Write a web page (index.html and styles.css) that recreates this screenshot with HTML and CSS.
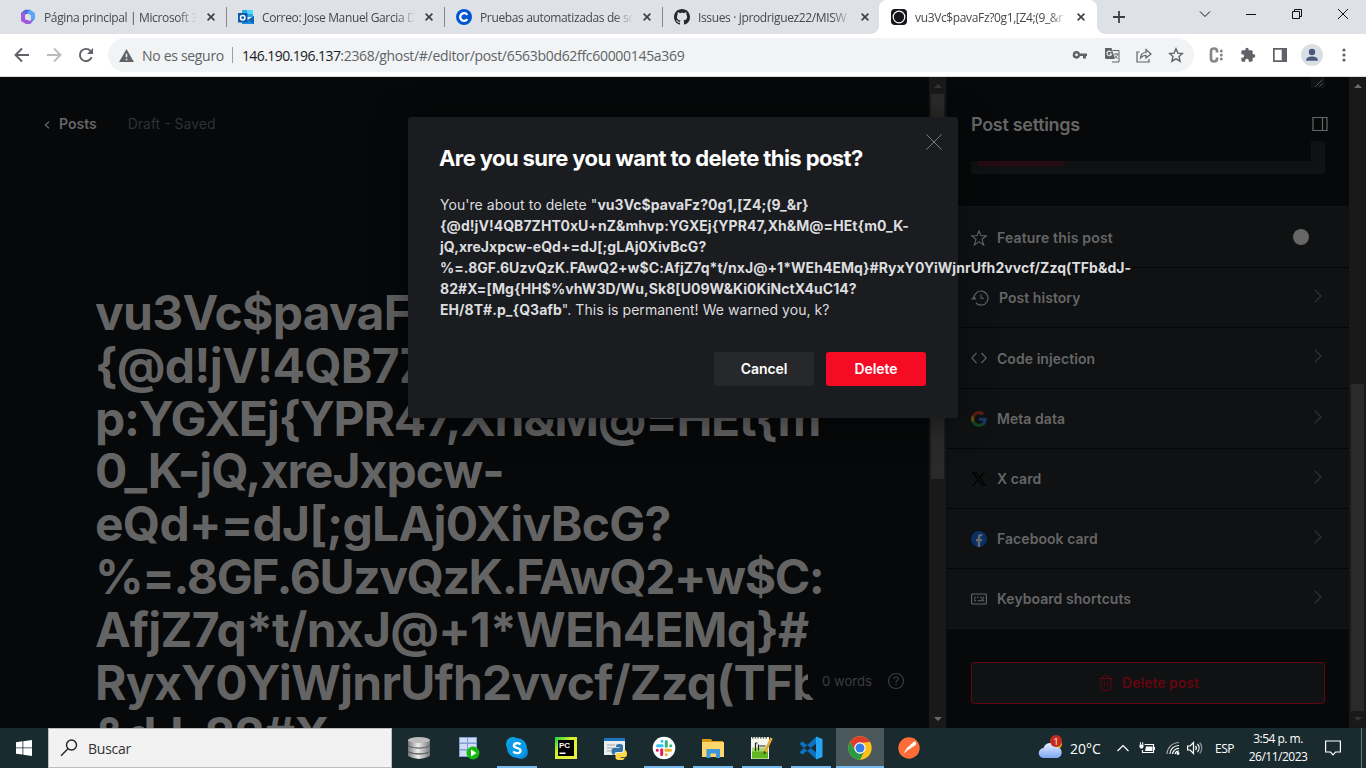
FILE: index.html
```html
<!DOCTYPE html>
<html lang="es">
<head>
<meta charset="utf-8">
<title>vu3Vc$pavaFz?0g1,[Z4;(9_&amp;r}</title>
<link rel="stylesheet" href="styles.css">
</head>
<body>
<header class="tabstrip">
  <div class="tab">
    <svg class="fav" viewBox="0 0 16 16"><path d="M5 .8h5L15 5v4L10.500 6.500 8 4.500 4.500 6v6L1 10V4z" fill="#4a6be0"/><path d="M10 .8L15 4v6l-5 5-4-1 5-3V6L7 4z" fill="#5ba8f4"/><path d="M1 5l4-3v8l5 2 4-2-4 5H6l-5-3z" fill="#a259d9"/><circle cx="8" cy="8" r="3" fill="#dee1e6"/></svg>
    <span class="tab-title">Página principal | Microsoft 3</span>
    <svg class="tab-x" viewBox="0 0 8 8"><path d="M.6.6l6.800 6.800M7.400.6L.6 7.400"/></svg>
  </div>
  <div class="tab">
    <svg class="fav" viewBox="0 0 16 16"><path d="M4 1h11v7H4z" fill="#28a8ea"/><path d="M9 1h6v4H9z" fill="#50d9ff"/><path d="M4 7l6 4 6-4v8H4z" fill="#1490df"/><path d="M16 7v8l-6-4z" fill="#0f64b5"/><path d="M0 4h9.500v9.500H0z" fill="#0f5aad"/><circle cx="4.700" cy="8.700" r="2.200" fill="none" stroke="#fff" stroke-width="1.500"/></svg>
    <span class="tab-title">Correo: Jose Manuel Garcia D</span>
    <svg class="tab-x" viewBox="0 0 8 8"><path d="M.6.6l6.800 6.800M7.400.6L.6 7.400"/></svg>
  </div>
  <div class="tab">
    <svg class="fav" viewBox="0 0 16 16"><circle cx="8" cy="8" r="8" fill="#0056d2"/><path d="M11.300 5.800A3.900 3.900 0 1 0 11.300 10.200" fill="none" stroke="#fff" stroke-width="2.300"/></svg>
    <span class="tab-title">Pruebas automatizadas de so</span>
    <svg class="tab-x" viewBox="0 0 8 8"><path d="M.6.6l6.800 6.800M7.400.6L.6 7.400"/></svg>
  </div>
  <div class="tab">
    <svg class="fav" viewBox="0 0 16 16"><path fill="#24292f" d="M8 0C3.580 0 0 3.580 0 8c0 3.540 2.290 6.530 5.470 7.590.4.070.55-.17.55-.38 0-.19-.01-.82-.01-1.490-2.010.37-2.530-.49-2.690-.94-.09-.23-.48-.94-.82-1.130-.28-.15-.68-.52-.01-.53.63-.01 1.080.58 1.230.82.72 1.210 1.870.87 2.330.66.070-.52.28-.87.51-1.070-1.780-.2-3.640-.89-3.640-3.950 0-.87.31-1.590.82-2.150-.08-.2-.36-1.020.08-2.120 0 0 .67-.21 2.200.82.64-.18 1.320-.27 2-.27s1.360.09 2 .27c1.530-1.040 2.200-.82 2.200-.82.44 1.100.16 1.920.08 2.120.51.56.82 1.270.82 2.150 0 3.070-1.870 3.750-3.650 3.950.29.25.54.73.54 1.480 0 1.070-.01 1.930-.01 2.200 0 .21.15.46.55.38A8.010 8.010 0 0 0 16 8c0-4.420-3.580-8-8-8z"/></svg>
    <span class="tab-title">Issues · jprodriguez22/MISW</span>
    <svg class="tab-x" viewBox="0 0 8 8"><path d="M.6.6l6.800 6.800M7.400.6L.6 7.400"/></svg>
  </div>
  <div class="tab tab-active">
    <svg class="fav" viewBox="0 0 16 16"><rect width="16" height="16" rx="4" fill="#15171a"/><circle cx="8" cy="8" r="5.800" fill="none" stroke="#fff" stroke-width="1.200"/></svg>
    <span class="tab-title">vu3Vc$pavaFz?0g1,[Z4;(9_&amp;r</span>
    <svg class="tab-x" viewBox="0 0 8 8"><path d="M.6.6l6.800 6.800M7.400.6L.6 7.400"/></svg>
  </div>
  <svg class="new-tab" viewBox="0 0 12 12"><path d="M6 0v12M0 6h12"/></svg>
  <div class="window-controls">
    <svg viewBox="0 0 12 12"><path d="M1 3.500l5 5 5-5"/></svg>
    <svg viewBox="0 0 12 12"><path d="M1 6.500h10"/></svg>
    <svg viewBox="0 0 12 12"><path d="M1.500 3.500h7v7h-7zM3.500 3.500v-2h7v7h-2"/></svg>
    <svg viewBox="0 0 12 12"><path d="M1 1l10 10M11 1L1 11"/></svg>
  </div>
</header>

<nav class="toolbar">
  <div class="nav-buttons">
    <svg viewBox="0 0 16 16" class="nav-ic"><path d="M15 8H2M8 1.500L1.500 8 8 14.500"/></svg>
    <svg viewBox="0 0 16 16" class="nav-ic nav-off"><path d="M1 8h13M8 1.500L14.500 8 8 14.500"/></svg>
    <svg viewBox="0 0 16 16" class="nav-ic"><path d="M13.700 10.200A6.100 6.100 0 1 1 12.600 4"/><path d="M15 1v6H9z" class="solid"/></svg>
  </div>
  <div class="omnibox">
    <svg class="warn" viewBox="0 0 16 14"><path d="M8 0l8 14H0z" fill="#5f6368"/><path d="M7.200 5h1.600v4H7.200zM7.200 10.500h1.600V12H7.200z" fill="#f1f3f4"/></svg>
    <span class="insecure">No es seguro</span>
    <span class="omni-sep"></span>
    <span class="url"><span class="host">146.190.196.137</span>:2368/ghost/#/editor/post/6563b0d62ffc60000145a369</span>
    <div class="omni-icons">
      <svg viewBox="0 0 16 16"><path fill-rule="evenodd" d="M4.500 4a3.800 3.800 0 1 0 3.600 5H11v2.500h3V9h1V6.400H8.100A3.800 3.800 0 0 0 4.500 4zm0 2.400a1.400 1.400 0 1 1 0 2.800 1.400 1.400 0 0 1 0-2.800z"/></svg>
      <svg viewBox="0 0 16 16"><path d="M1 1h6.500l3.500 11H2L1 11z"/><path d="M8.500 3.500H15v11.500H8" fill="none" stroke="#5f6368"/><path d="M7.300 5.300A2.300 2.300 0 1 0 7.500 7H5.500" fill="none" stroke="#f1f3f4" stroke-width="1.100"/><path d="M10 7h4.500M12.200 6v1M13.700 7c-.4 2-1.700 3.300-3 4M10.800 8.500c.8 1.500 1.800 2.500 3 3" fill="none" stroke="#5f6368" stroke-width=".9"/></svg>
      <svg viewBox="0 0 16 16"><path fill="none" stroke="#5f6368" stroke-width="1.200" d="M3.500 5H1v10h12v-3M4.500 11c.3-4 2.500-5.500 5.500-5.500V2.600L15 7l-5 4V8.300c-2.400 0-4 .7-5.500 2.700z"/></svg>
      <svg viewBox="0 0 16 16"><path fill="none" stroke="#5f6368" stroke-width="1.400" d="M8 1.800l1.900 4.300 4.600.4-3.500 3.100 1.100 4.600L8 11.800l-4.100 2.400L5 9.600 1.500 6.500l4.600-.4z"/></svg>
    </div>
  </div>
  <div class="tool-icons">
    <svg viewBox="0 0 16 16"><path fill="none" stroke="#868686" stroke-width="2.700" d="M9 5.500V4.200C9 2.500 8 1.500 6.200 1.500S3 2.500 3 4.200v7.600c0 1.700 1.300 2.700 3.200 2.700S9 13.500 9 11.800v-1.300"/><circle cx="13.300" cy="4" r="1.500" fill="#868686"/><circle cx="13.300" cy="8" r="1.500" fill="#868686"/><circle cx="13.300" cy="12" r="1.500" fill="#868686"/></svg>
    <svg viewBox="0 0 24 24"><path fill="#5f6368" d="M20.500 11H19V7a2 2 0 0 0-2-2h-4V3.500a2.500 2.500 0 0 0-5 0V5H4a2 2 0 0 0-2 2v3.800h1.500a2.700 2.700 0 0 1 0 5.400H2V20a2 2 0 0 0 2 2h3.800v-1.500a2.700 2.700 0 0 1 5.400 0V22H17a2 2 0 0 0 2-2v-4h1.500a2.500 2.500 0 0 0 0-5z"/></svg>
    <svg viewBox="0 0 16 16"><path fill="#5f6368" fill-rule="evenodd" d="M1 1h14v14H1zM2.700 2.700v10.600h7V2.700z"/></svg>
    <svg class="avatar" viewBox="0 0 22 22"><circle cx="11" cy="11" r="11" fill="#dadfe6"/><circle cx="11" cy="8" r="3.200" fill="#4b5a7a"/><path d="M5 16.800c0-3 3-4.300 6-4.300s6 1.300 6 4.300z" fill="#4b5a7a"/></svg>
    <svg viewBox="0 0 16 16"><g fill="#5f6368"><circle cx="8" cy="3" r="1.600"/><circle cx="8" cy="8" r="1.600"/><circle cx="8" cy="13" r="1.600"/></g></svg>
  </div>
</nav>

<main class="page">
  <section class="editor">
    <div class="editor-head">
      <svg class="back" viewBox="0 0 6 8"><path d="M5 .8L1.300 4 5 7.200"/></svg>
      <span class="posts">Posts</span>
      <span class="status">Draft - Saved</span>
    </div>
    <h1 class="post-title"><span>vu3Vc$pavaFz?0g1,[Z4;(9_&amp;r}</span><span>{@d!jV!4QB7ZHT0xU+nZ&amp;mhv</span><span class="tight">p:YGXEj{YPR47,Xh&amp;M@=HEt{m</span><span class="snug">0_K-jQ,xreJxpcw-</span><span>eQd+=dJ[;gLAj0XivBcG?</span><span class="tighter">%=.8GF.6UzvQzK.FAwQ2+w$C:</span><span>AfjZ7q*t/nxJ@+1*WEh4EMq}#</span><span>RyxY0YiWjnrUfh2vvcf/Zzq(TFb</span><span class="snug">&amp;dJ-82#X</span></h1>
    <div class="words"><span>0 words</span>
      <svg viewBox="0 0 18 18"><circle cx="9" cy="9" r="7.500"/><path d="M6.800 7.200C6.800 5.800 7.700 5 9 5s2.200.8 2.200 2c0 1.600-2.200 1.600-2.200 3.400M9 12v1.200"/></svg>
    </div>
  </section>
  <div class="scrollbar sb-editor"><i class="up dim"></i><b></b><i class="down"></i></div>
  <aside class="settings">
    <div class="settings-top">
      <div class="excerpt"><svg viewBox="0 0 8 8"><path d="M.5 7.500l7-7M4.500 7.500l3-3"/></svg></div>
      <div class="authors"><span></span></div>
      <div class="settings-head"><h2>Post settings</h2></div>
      <svg class="panel-ic" viewBox="0 0 16 14"><path d="M1 .5h14v13H1zM10.500.5v13"/></svg>
    </div>
    <ul class="rows">
      <li class="tall first"><svg class="ic" viewBox="0 0 16 16"><path d="M8 .8l2 5h5.300L11 9.300l1.700 5.700L8 11.600 3.300 15 5 9.300.7 5.800H6z"/></svg><span class="feature">Feature this post</span><em class="knob"></em></li>
      <li><svg class="ic wide" viewBox="0 0 18 18"><path d="M3 9a7 7 0 1 1 2 5M10 5.500V9.200h3"/><path d="M0 10.500L3 7l2.500 3.500z" class="fillic"/></svg><span>Post history</span><svg class="chev" viewBox="0 0 8 14"><path d="M.7.7L7 7 .7 13.300"/></svg></li>
      <li class="tall"><svg class="ic" viewBox="0 0 16 16"><path d="M5.500 3L.8 8l4.700 5M10.500 3l4.700 5-4.700 5"/></svg><span>Code injection</span><svg class="chev" viewBox="0 0 8 14"><path d="M.7.7L7 7 .7 13.300"/></svg></li>
      <li><svg class="ic brand" viewBox="0 0 24 24"><path fill="#1a3664" d="M23.500 12.300c0-.8-.1-1.600-.2-2.300H12v4.500h6.500a5.600 5.600 0 0 1-2.400 3.600v3h3.900c2.200-2.100 3.500-5.100 3.500-8.800z"/><path fill="#14441f" d="M12 24c3.200 0 6-1.100 8-2.900l-3.900-3a7.300 7.300 0 0 1-10.800-3.800h-4v3.100A12 12 0 0 0 12 24z"/><path fill="#645000" d="M5.300 14.300a7 7 0 0 1 0-4.600V6.600h-4a12 12 0 0 0 0 10.800z"/><path fill="#5f1c16" d="M12 4.800c1.800 0 3.300.6 4.600 1.800L20 3.200A12 12 0 0 0 1.300 6.600l4 3.100A7.100 7.100 0 0 1 12 4.800z"/></svg><span>Meta data</span><svg class="chev" viewBox="0 0 8 14"><path d="M.7.7L7 7 .7 13.300"/></svg></li>
      <li><svg class="ic brand" viewBox="0 0 16 16"><path fill="#020202" fill-rule="evenodd" d="M1 1h4.500l3.300 4.500L12.700 1h1.800L9.600 6.600 15 15h-4.500L6.900 9.800 2.600 15H.9l5.200-6.200zM3.400 2.300l7.800 11.400h1.500L4.900 2.300z"/></svg><span>X card</span><svg class="chev" viewBox="0 0 8 14"><path d="M.7.7L7 7 .7 13.300"/></svg></li>
      <li><svg class="ic brand" viewBox="0 0 16 16"><circle cx="8" cy="8" r="8" fill="#0a2f62"/><path fill="#656a70" d="M6.800 16v-5.700H4.900V8h1.900V6.200c0-2 1.200-3.100 3-3.100l1.500.1v2h-1c-.9 0-1.200.5-1.200 1.100V8h2.200l-.4 2.300H9.100V16z"/></svg><span>Facebook card</span><svg class="chev" viewBox="0 0 8 14"><path d="M.7.7L7 7 .7 13.300"/></svg></li>
      <li class="last"><svg class="ic" viewBox="0 0 16 16"><rect x=".6" y="3" width="14.800" height="10" rx="1"/><path d="M3 6.200h1.700M6 6.200h1.700M9 6.200h1.700M11.700 6.200h1.500M3 9.800h2M6.500 9.800h6.700M3 8h1.500M10 8h3"/></svg><span>Keyboard shortcuts</span><svg class="chev" viewBox="0 0 8 14"><path d="M.7.7L7 7 .7 13.300"/></svg></li>
    </ul>
    <button class="delete-post"><svg viewBox="0 0 14 16"><path d="M.5 3.500h13M4.500 3.500V1.800c0-.7.400-1.100 1-1.100h3c.6 0 1 .4 1 1.100v1.700M2 3.500v10.700c0 .7.500 1.200 1.200 1.200h7.600c.7 0 1.200-.5 1.200-1.200V3.500M5.300 7v5M8.700 7v5"/></svg><span>Delete post</span></button>
  </aside>
  <div class="scrollbar sb-page"><i class="up"></i><b></b><i class="down dim"></i></div>

  <div class="modal" role="dialog">
    <svg class="close" viewBox="0 0 16 16"><path d="M.5.5l15 15M15.500.5l-15 15"/></svg>
    <h1>Are you sure you want to delete this post?</h1>
    <p>You're about to delete "<strong>vu3Vc$pavaFz?0g1,[Z4;(9_&amp;r}<br>{@d!jV!4QB7ZHT0xU+nZ&amp;mhvp:YGXEj{YPR47,Xh&amp;M@=HEt{m0_K-<br>jQ,xreJxpcw-eQd+=dJ[;gLAj0XivBcG?<br>%=.8GF.6UzvQzK.FAwQ2+w$C:AfjZ7q*t/nxJ@+1*WEh4EMq}#RyxY0YiWjnrUfh2vvcf/Zzq(TFb&amp;dJ-<br>82#X=[Mg{HH$%vhW3D/Wu,Sk8[U09W&amp;Ki0KiNctX4uC14?<br>EH/8T#.p_{Q3afb</strong>". This is permanent! We warned you, k?</p>
    <div class="actions"><button>Cancel</button><button class="danger">Delete</button></div>
  </div>
</main>

<footer class="taskbar">
  <div class="start"><svg viewBox="0 0 16 16"><path fill="#fff" d="M0 2.200l6.500-.9v6.200H0zM7.300 1.200L16 0v7.500H7.300zM0 8.300h6.500v6.300L0 13.700zM7.300 8.300H16V16l-8.700-1.200z"/></svg></div>
  <div class="search"><svg viewBox="0 0 18 18"><circle cx="11.500" cy="6" r="5"/><path d="M8 9.700L1 16.800"/></svg><span>Buscar</span></div>
  <div class="apps">
    <div class="app"><svg viewBox="0 0 24 24"><defs><linearGradient id="steel"><stop offset="0" stop-color="#777"/><stop offset=".45" stop-color="#eee"/><stop offset="1" stop-color="#777"/></linearGradient></defs><path fill="url(#steel)" d="M1 4h22v5.500q-11 4.500-22 0zM1 10.500q11 4 22 0v5q-11 4-22 0zM1 16.500q11 4 22 0V20q-11 6-22 0z"/><path fill="none" stroke="#858585" stroke-width=".8" d="M1 10q11 4.200 22 0M1 16q11 4.200 22 0"/><ellipse cx="12" cy="4" rx="11" ry="3" fill="#bdbdbd"/></svg></div>
    <div class="app"><svg viewBox="0 0 24 24"><path fill="#7f9fd4" d="M3 1h18v20H3z"/><path fill="#cfdcf3" d="M4 2h7v4.500H4zM12 2h8v4.500h-8zM4 8h7v5H4zM12 8h8v5h-8zM4 14.500h7V20H4z"/><circle cx="17" cy="17" r="6.500" fill="#17b80f"/><path fill="#fff" d="M15 13.500l5.500 3.500-5.500 3.500z"/></svg></div>
    <div class="app run"><svg viewBox="0 0 24 24"><circle cx="8" cy="8" r="7" fill="#0aa5ea"/><circle cx="16" cy="16" r="7" fill="#0a86d8"/><circle cx="12" cy="12" r="10" fill="#0a9be6"/><path fill="none" stroke="#fff" stroke-width="2.300" d="M15.500 8.500C14 6.500 9 6.800 8.900 9.500c0 3.300 6.800 1.700 6.600 5.200-.2 3-5.500 3-7.200.6"/></svg></div>
    <div class="app"><svg viewBox="0 0 24 24"><defs><linearGradient id="pc" x2="1" y2="1"><stop offset="0" stop-color="#0fd64a"/><stop offset=".4" stop-color="#d5f02a"/><stop offset="1" stop-color="#f3ee4a"/></linearGradient></defs><path fill="url(#pc)" d="M1 1h22v22H1z"/><path d="M4 4h16v16H4z"/><text x="5" y="12" class="pc-text">PC</text><path fill="#fff" d="M5.500 16.500h6V18h-6z"/></svg></div>
    <div class="app"><svg viewBox="0 0 24 24"><path fill="#e9edf0" d="M1 2h21v17H1z"/><path fill="#1d75bd" d="M1 2h21v3H1z"/><path stroke="#9aa" d="M4 9h8M4 12h5M4 15h4"/><path fill="#3673a5" d="M16 8c4 0 4 1 4 3v3c0 1.500-1 2-2 2h-4c-2 0-2.500 1-2.500 3C9 19 8.500 17 8.500 15c0-3 2-3.300 3-3.300h5v-.8H13c0-2 .5-2.900 3-2.900z"/><path fill="#ffd94b" d="M17 24c-4 0-4.500-1-4.500-3v-2c0-1.500 1-2 2-2H19c1.500 0 2-1 2-3 2.500 0 3 2 3 4 0 3-1.500 3.300-3 3.300h-3.500v.7h4c0 1.500-1 2-4.500 2z"/></svg></div>
    <div class="app run"><svg viewBox="0 0 24 24"><circle cx="12" cy="12" r="11.300" fill="#fff"/><g fill="none" stroke-width="3" stroke-linecap="round"><path stroke="#36c5f0" d="M5.500 9.700h4.700M10 5.200v.1"/><path stroke="#2eb67d" d="M14.300 5.500v4.700M18.700 9.700h.1"/><path stroke="#ecb22e" d="M13.800 14.300h4.700M14.200 18.600v.1"/><path stroke="#e01e5a" d="M9.700 13.800v4.700M5.300 14.300h-.1"/></g></svg></div>
    <div class="app run"><svg viewBox="0 0 24 24"><path fill="#d99a13" d="M1 3h9l1.500 2H22v4H1z"/><path fill="#ffd66b" d="M1 6h22v15H1z"/><path fill="#3e97dc" d="M5.500 13h13.500v9h-4v-4.500H9.500V22h-4z"/></svg></div>
    <div class="app run"><svg viewBox="0 0 24 24"><path fill="#f4f6ee" d="M1 1h18v22H1z"/><path fill="#5fb81f" d="M2 14h16v8.500H2z"/><path fill="#a5da68" d="M2 11.500h16v4H2z"/><path stroke="#555" stroke-width="1.500" stroke-dasharray="1.500 1.200" d="M2 1.700h16"/><path fill="none" stroke="#222" stroke-width="1.200" d="M5.500 7v8M5.500 7h2M8.500 8.500v6M9.500 10h6"/><path stroke="#e8a63a" stroke-width="2.800" d="M21.500 2L15 16"/><path fill="#633" d="M13.700 15l2.600 1.300-2.600 3z"/></svg></div>
    <div class="app run"><svg viewBox="0 0 24 24"><path fill="#0a74c4" d="M18 1v6L3.500 18.500.5 16.200 17 1zM18 23v-6L3.500 5.500.5 7.800 17 23z"/><path fill="#25a6f2" d="M17 .5L23.500 3v18L17 23.500z"/></svg></div>
    <div class="app run active"><svg viewBox="0 0 24 24"><circle cx="12" cy="12" r="11.700" fill="#fbc116"/><path fill="#df3c30" d="M1.900 6.100a11.700 11.700 0 0 1 20.200 0L12 6.700a5.300 5.300 0 0 0-4.600 8z"/><path fill="#279a46" d="M1.900 6.100A11.700 11.700 0 0 0 12 23.700l4.600-8.900a5.300 5.300 0 0 1-9.200 0z"/><circle cx="12" cy="12" r="5.700" fill="#fff"/><circle cx="12" cy="12" r="4.500" fill="#377ce8"/></svg></div>
    <div class="app"><svg viewBox="0 0 24 24"><circle cx="12" cy="12" r="10.700" fill="#ff6c37"/><path fill="#fff" d="M18 5.500a2.300 2.300 0 0 1 .5 3.600L11 14l-4.800 4 3.700-6L15.500 7A2.300 2.300 0 0 1 18 5.500z"/></svg></div>
  </div>
  <div class="tray">
    <svg class="weather" viewBox="0 0 26 24"><defs><linearGradient id="cl" x2="0" y2="1"><stop offset="0" stop-color="#e8efff"/><stop offset="1" stop-color="#7ba7f2"/></linearGradient></defs><circle cx="19.500" cy="9" r="4.500" fill="#f7a21b"/><path fill="url(#cl)" d="M6 23a5 5 0 0 1-.5-10A7 7 0 0 1 18.500 12a5.600 5.600 0 0 1 1 11z"/><circle cx="18" cy="6" r="6" fill="#c52b1e"/><text x="15.500" y="9.500" class="badge">1</text></svg>
    <span class="temp">20°C</span>
    <svg class="t-up" viewBox="0 0 12 12"><path d="M.5 9L6 3.500 11.500 9"/></svg>
    <svg class="t-bat" viewBox="0 0 16 12"><path d="M5.500 2.500h9v8H3.500V8"/><path d="M7 4.500h6.500v4.500H6z" class="w"/><path d="M14.500 5h1.500v3h-1.500zM.5 2.500h4v2.500L3.500 6.500h-2L.5 5zM1 .3h1v2H1zM3.200.3h1v2h-1z" class="w"/></svg>
    <svg class="t-wifi" viewBox="0 0 14 14"><path d="M1 13A12 12 0 0 1 13 1.500" opacity=".6"/><path d="M3.800 13A9 9 0 0 1 13 4.500M6.500 13A6.500 6.500 0 0 1 13 7.300M9 13a4 4 0 0 1 4-3"/><circle cx="12" cy="12.500" r="1.400" class="w"/></svg>
    <svg class="t-vol" viewBox="0 0 17 14"><path d="M.6 5h2.500L6.500 1.500v11L3.100 9H.6zM8.500 5a3 3 0 0 1 0 4M10.500 3a6 6 0 0 1 0 8"/><path d="M12.700 1.500a8.500 8.500 0 0 1 0 11" opacity=".5"/></svg>
    <span class="lang">ESP</span>
    <div class="clock"><span>3:54 p. m.</span><span>26/11/2023</span></div>
    <svg class="t-note" viewBox="0 0 16 16"><path d="M.6 1h14.800v11H10.500L8 14.800 5.500 12H.6z"/></svg>
    <span class="peek"></span>
  </div>
</footer>
</body>
</html>
```
FILE: styles.css
```css
* { box-sizing: border-box; }
body { margin: 0; width: 1366px; height: 768px; overflow: hidden; display: flex; flex-direction: column; font-family: Inter, sans-serif; background: #060809; }
svg { display: block; flex: none; }
button { font: inherit; border: 0; padding: 0; }

/* tab strip */
.tabstrip { height: 34px; background: #dee1e6; display: flex; align-items: center; padding-left: 9px; font: 12px "Open Sans", sans-serif; letter-spacing: -.36px; color: #45494d; }
.tab { width: 218px; height: 34px; display: flex; align-items: center; padding-left: 11px; position: relative; }
.tab:not(.tab-active)::after { content: ""; width: 1px; height: 20px; background: #84888c; margin-left: 11px; }
.tab:nth-child(4)::after { visibility: hidden; }
.fav { width: 16px; height: 16px; margin-right: 8px; }
.tab-title { width: 152px; overflow: hidden; white-space: nowrap; mask-image: linear-gradient(90deg, #000 134px, transparent 153px); }
.tab-x { width: 8px; height: 8px; margin-left: 11px; stroke: #3c4043; stroke-width: 1.600; fill: none; }
.tab-active { background: #fff; border-radius: 8px 8px 0 0; margin-left: -2px; padding-left: 12px; }
.tab-active::before, .tab-active::after { content: ""; position: absolute; bottom: 0; width: 8px; height: 8px; }
.tab-active::before { left: -8px; background: radial-gradient(circle at 0 0, #dee1e6 7.500px, #fff 8px); }
.tab-active::after { right: -8px; background: radial-gradient(circle at 100% 0, #dee1e6 7.500px, #fff 8px); }
.tab-active .tab-x { margin-left: 10px; }
.new-tab { width: 12px; height: 12px; margin-left: 16px; stroke: #3c4043; stroke-width: 1.800; }
.window-controls { display: flex; gap: 34px; margin-left: auto; padding: 0 17px 6px 0; }
.window-controls svg { width: 12px; height: 12px; fill: none; stroke: #111; }

/* toolbar */
.toolbar { height: 43px; background: #fff; border-bottom: 1px solid #dcdfe2; display: flex; align-items: center; padding-left: 14px; }
.nav-buttons { display: flex; gap: 16px; }
.nav-ic { width: 16px; height: 16px; fill: none; stroke: #5f6368; stroke-width: 1.900; }
.nav-ic .solid { fill: #5f6368; stroke: none; }
.nav-off { stroke: #babcbe; }
.omnibox { width: 1086px; height: 34px; margin-left: 14px; border-radius: 17px; background: #f1f3f4; display: flex; align-items: center; padding: 0 10px 0 11px; font: 14px "Open Sans", sans-serif; letter-spacing: -.31px; color: #5f6368; }
.warn { width: 15px; height: 13px; margin-right: 8px; }
.omni-sep { width: 1px; height: 16px; background: #9aa0a6; margin: 0 9px 0 8px; }
.url { white-space: nowrap; }
.host { color: #202124; letter-spacing: -.58px; }
.omni-icons { display: flex; gap: 16px; margin-left: auto; }
.omni-icons svg { width: 16px; height: 16px; fill: #5f6368; }
.tool-icons { display: flex; align-items: center; gap: 16px; margin-left: 14px; }
.tool-icons svg { width: 16px; height: 16px; }
.tool-icons .avatar { width: 22px; height: 22px; margin: 0 -3px; }

/* editor */
.page { height: 651px; display: flex; position: relative; overflow: hidden; }
.editor { width: 929px; position: relative; overflow: hidden; background: #060809; }
.editor-head { display: flex; align-items: center; height: 20px; margin: 37px 0 0 44px; font-size: 14px; }
.back { width: 6px; height: 8px; margin-top: 2px; fill: none; stroke: #666; stroke-width: 1.200; }
.posts { margin: -1px 0 0 9px; font-weight: 600; color: #666; }
.status { margin: -1px 0 0 31px; color: #2f3235; }
.post-title { margin: 153px 0 0 95px; font-size: 48px; line-height: 52.800px; font-weight: 700; letter-spacing: -.75px; color: #646464; white-space: nowrap; }
.post-title span { display: block; }
.post-title .snug { letter-spacing: -.95px; }
.post-title .tight { letter-spacing: -1.250px; }
.post-title .tighter { letter-spacing: -1.400px; }
.words { position: absolute; left: 808px; top: 583px; width: 121px; height: 41px; border-radius: 12px; padding-left: 14px; background: #060809; display: flex; align-items: center; font-size: 13.100px; color: #3b3d40; white-space: nowrap; }
.words svg { width: 18px; height: 18px; margin-left: 15px; margin-top: 1px; fill: none; stroke: #3b3d40; stroke-width: 1.200; }

/* scrollbars */
.scrollbar { width: 17px; background: #191919; display: flex; flex-direction: column; align-items: center; }
.sb-editor { width: 18px; border-right: 1px solid #0b0c0d; }
.scrollbar b { width: 13px; background: #2a2a2a; }
.scrollbar i { width: 0; height: 0; border: 4px solid transparent; }
.scrollbar .up { border-bottom-color: #6a6a6a; border-top: 0; margin-top: 7px; }
.scrollbar .down { border-top-color: #6a6a6a; border-bottom: 0; margin: auto 0 7px; }
.scrollbar .up.dim { border-bottom-color: #343434; }
.scrollbar .down.dim { border-top-color: #343434; }
.sb-editor b { height: 385px; margin-top: 6px; }
.sb-page b { height: 327px; margin-top: 296px; }

/* settings panel */
.settings { width: 402px; background: #060809; color: #666; font-size: 14px; font-weight: 600; letter-spacing: .05px; }
.settings-top { height: 130px; position: relative; }
.excerpt { position: absolute; left: 364px; top: 0; width: 14px; height: 11px; background: #0f1113; }
.excerpt svg { width: 8px; height: 8px; margin: 2px 0 0 4px; stroke: #555; }
.authors { position: absolute; left: 24px; top: 64px; width: 354px; height: 33px; background: #0f1113; border-radius: 2px; }
.authors span { position: absolute; left: 7px; bottom: 8px; width: 87px; height: 12px; border-radius: 2px; background: #260c12; }
.settings-head { position: absolute; left: 0; top: 0; width: 364px; height: 84px; padding: 37px 0 0 24px; background: #060809; }
.settings-head h2 { margin: 0; font-size: 18px; line-height: 22px; font-weight: 600; letter-spacing: -.3px; }
.panel-ic { position: absolute; left: 365px; top: 40px; width: 16px; height: 14px; fill: none; stroke: #666; stroke-width: 1.200; }
.rows { list-style: none; margin: 0; padding: 0; background: #0f1113; border-top: 1px solid #131517; margin-top: -1px; }
.rows li { height: 60px; display: flex; align-items: center; border-bottom: 1px solid #050607; padding: 0 27px 0 24px; }
.rows .tall { height: 61px; }
.rows .first { padding-top: 1px; }
.rows .last { border-color: #131517; }
.feature { letter-spacing: .16px; }
.ic { width: 16px; height: 16px; margin-right: 10px; fill: none; stroke: #666; stroke-width: 1.100; }
.ic.wide { width: 18px; height: 18px; }
.ic .fillic { fill: #666; stroke: none; }
.brand { stroke: none; }
.chev { width: 8px; height: 14px; margin-left: auto; margin-bottom: 4px; fill: none; stroke: #34363a; stroke-width: 1.100; }
.knob { width: 16px; height: 16px; border-radius: 50%; background: #666; margin-left: auto; margin-right: 13px; margin-bottom: 1px; }
.delete-post { display: flex; align-items: center; justify-content: center; width: 354px; height: 42px; margin: 33px 0 0 24px; padding: 0 0 1px 2px; border: 1px solid #63060f; border-radius: 3px; background: #0f1113; color: #63060f; font-weight: 600; }
.delete-post svg { width: 14px; height: 16px; margin-right: 9px; fill: none; stroke: #63060f; }

/* dialog */
.modal { position: absolute; left: 408px; top: 40px; width: 550px; height: 301px; padding: 29px 32px; border-radius: 3px; background: #1b1c20; box-shadow: 0 4px 34px rgba(0, 0, 0, .5); color: #dcdddf; white-space: nowrap; }
.modal h1 { margin: 0 0 0 -1px; font-size: 22px; line-height: 25px; font-weight: 700; letter-spacing: -.6px; color: #fff; }
.modal p { margin: 23px 0 0; font-size: 14px; line-height: 21px; letter-spacing: .05px; }
.close { position: absolute; left: 518px; top: 17px; width: 16px; height: 16px; stroke: #85878a; stroke-width: .9; }
.actions { display: flex; justify-content: flex-end; gap: 12px; margin-top: 32px; }
.actions button { width: 100px; height: 34px; padding-bottom: 1px; border-radius: 3px; background: #27282c; color: #fff; font-size: 14px; font-weight: 600; letter-spacing: -.1px; }
.actions .danger { background: #f50b23; }

/* taskbar */
.taskbar { height: 40px; background: #1a2b30; display: flex; color: #fff; font-family: "Open Sans", sans-serif; }
.start { width: 48px; display: flex; align-items: center; justify-content: center; }
.start svg { width: 16px; height: 16px; }
.search { width: 344px; background: #f2f2f2; border: 1px solid #bcbcbc; display: flex; align-items: center; padding-left: 11px; font-size: 14px; letter-spacing: -.25px; color: #333; }
.search svg { width: 18px; height: 18px; margin-right: 10px; fill: none; stroke: #222; stroke-width: 1.400; }
.apps { display: flex; padding-left: 3px; gap: 1px; }
.app { width: 48px; height: 40px; display: flex; align-items: center; justify-content: center; position: relative; }
.app svg { width: 24px; height: 24px; }
.run::after { content: ""; position: absolute; left: 4px; right: 4px; bottom: 0; height: 2px; background: #76b9ed; }
.active { background: #4a575b; }
.active::after { left: 0; right: 0; }
.pc-text { font: 700 8px "Liberation Sans", sans-serif; fill: #fff; }
.badge { font: 9px "Open Sans", sans-serif; fill: #fff; }
.tray { margin-left: auto; display: flex; align-items: center; height: 40px; }
.tray svg { fill: none; stroke: #fff; stroke-width: 1.200; }
.tray .w { fill: #fff; stroke: none; }
.tray .weather { width: 26px; height: 24px; margin-right: 6px; margin-bottom: 2px; stroke: none; }
.temp { font-size: 14px; width: 29px; margin-right: 18px; white-space: nowrap; }
.t-up { width: 12px; height: 12px; margin-right: 10px; }
.t-bat { width: 16px; height: 12px; margin-right: 11px; }
.t-wifi { width: 14px; height: 14px; margin-right: 7px; }
.t-vol { width: 17px; height: 14px; margin-right: 11px; }
.lang { font-size: 12px; letter-spacing: -.5px; width: 18px; margin-right: 16px; white-space: nowrap; }
.clock { display: flex; flex-direction: column; align-items: center; font-size: 12px; line-height: 18px; letter-spacing: -.5px; width: 58px; margin-right: 18px; white-space: nowrap; }
.t-note { width: 16px; height: 16px; margin-right: 20px; }
.peek { width: 5px; height: 40px; border-left: 1px solid #69767a; }
```
